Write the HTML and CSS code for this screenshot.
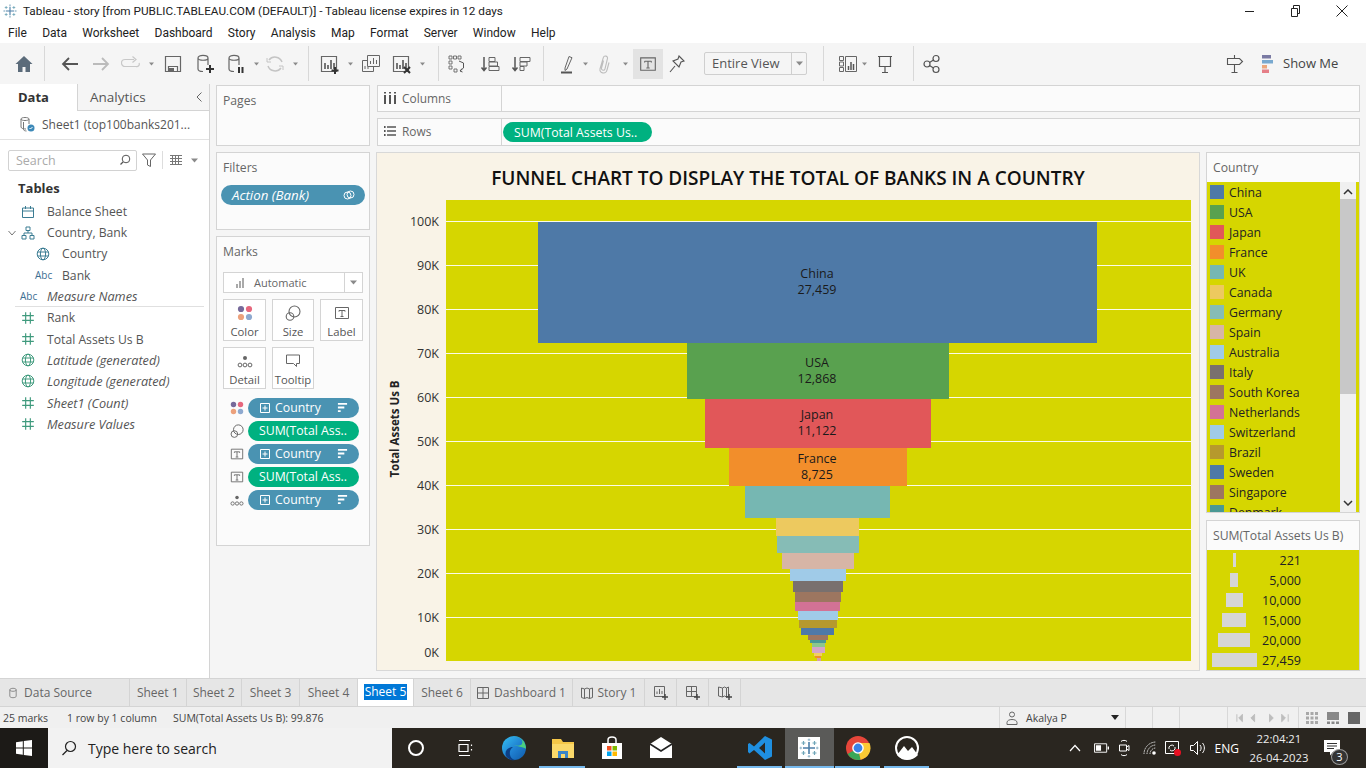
FILE: index.html
```html
<!DOCTYPE html>
<html lang="en">
<head>
<meta charset="utf-8">
<title>Tableau - story</title>
<link rel="stylesheet" href="styles.css">
</head>
<body>
<svg class="sprite" aria-hidden="true">
  <symbol id="logo" viewBox="0 0 20 20"><g fill="none" stroke-width="1.6"><path d="M10 4v12M4 10h12" stroke="#4d7fa8"/><path d="M4.5 3v4M2.5 5h4M15.5 3v4M13.5 5h4M4.5 13v4M2.5 15h4M15.5 13v4M13.5 15h4" stroke="#6fa6b8" stroke-width="1.2"/><path d="M10 .5v2.6M8.7 1.8h2.6M10 17v2.6M8.7 18.3h2.6M1.8 8.7v2.6M.5 10h2.6M18.2 8.7v2.6M17 10h2.6" stroke="#8fb4c8" stroke-width="1"/></g></symbol>
  <symbol id="caret" viewBox="0 0 7 5"><path d="M0 .5h7L3.5 4.500z" fill="#8a8a8a"/></symbol>
  <symbol id="cyl" viewBox="0 0 20 20"><g fill="none" stroke="#666" stroke-width="1.2"><path d="M3 4c0-3.500 10-3.500 10 0v7M3 4c0 3 10 3 10 0M3 4v11c0 2 3 2.500 5 2.500"/></g></symbol>
  <symbol id="chart-box" viewBox="0 0 20 20"><path d="M1.500 2.500h15v15h-15z" fill="none" stroke="#666" stroke-width="1.200"/><path d="M5 9v6M8 11v4M11 6v9M14 9v6" stroke="#555" stroke-width="1.600"/></symbol>
  <symbol id="t-box" viewBox="0 0 16 16"><path d="M1.500 2.500h13v11h-13z" fill="none" stroke="#666"/><path d="M5 5.500h6M8 5.500v6M6.500 11.500h3M5 5.500v1.200M11 5.500v1.200" fill="none" stroke="#666"/></symbol>
  <symbol id="dots" viewBox="0 0 16 16"><circle cx="4" cy="4" r="3.100" fill="#76699a"/><circle cx="12" cy="4" r="3.100" fill="#e6677d"/><circle cx="4" cy="12" r="3.100" fill="#eca17c"/><circle cx="12" cy="12" r="3.100" fill="#8ea9cf"/></symbol>
  <symbol id="lasso" viewBox="0 0 16 16"><g fill="none" stroke="#666" stroke-width="1.100"><circle cx="9.500" cy="6.500" r="5.500"/><circle cx="5" cy="11.500" r="3.800"/></g></symbol>
  <symbol id="detail" viewBox="0 0 16 16"><circle cx="8" cy="5" r="2" fill="#666"/><g fill="none" stroke="#666"><circle cx="3" cy="12" r="1.900"/><circle cx="8" cy="12" r="1.900"/><circle cx="13" cy="12" r="1.900"/></g></symbol>
  <symbol id="plusbox" viewBox="0 0 10 10"><path d="M.5.500h9v9h-9zM5 2.500v5M2.500 5h5" fill="none" stroke="#fff"/></symbol>
  <symbol id="sort" viewBox="0 0 12 12"><path d="M1 1h10v2H1zM1 5h7v2H1zM1 9h3v2H1z" fill="#fff"/></symbol>
  <symbol id="hash" viewBox="0 0 12 12"><path d="M4 1v10M8 1v10M1 4h10M1 8h10" fill="none" stroke="#3f9a7d"/></symbol>
  <symbol id="globe" viewBox="0 0 14 14"><g fill="none" stroke-width="1"><circle cx="7" cy="7" r="5.800"/><ellipse cx="7" cy="7" rx="2.600" ry="5.800"/><path d="M1.500 5h11M1.500 9h11"/></g></symbol>
  <symbol id="sheetplus" viewBox="0 0 16 16"><path d="M1.500 1.500h10v10h-10zM4 9V6.500M6.500 9V4M9 9V6" fill="none" stroke="#666"/><path d="M12 9v6M9 12h6" stroke="#444" stroke-width="1.400"/></symbol>
  <symbol id="dashplus" viewBox="0 0 16 16"><path d="M1.500 1.500h10v10h-10zM6.500 1.500v10M1.500 6.500h10" fill="none" stroke="#666"/><path d="M12 9v6M9 12h6" stroke="#444" stroke-width="1.400"/></symbol>
  <symbol id="storyplus" viewBox="0 0 16 16"><path d="M1.500 2l4 1 2-1 2 1 2-1v9l-2 1-2-1-2 1-4-1zM5.500 3v9M9.500 3v9" fill="none" stroke="#666"/><path d="M12 9v6M9 12h6" stroke="#444" stroke-width="1.400"/></symbol>
</svg>

<header class="titlebar">
  <svg class="title-logo"><use href="#logo"/></svg>
  <span class="title-text">Tableau - story [from PUBLIC.TABLEAU.COM (DEFAULT)] - Tableau license expires in 12 days</span>
  <div class="winbtns">
    <svg class="winbtn" viewBox="0 0 12 12"><path d="M1 6.500h9" stroke="#222" fill="none"/></svg>
    <svg class="winbtn" viewBox="0 0 12 12"><path d="M1.500 3.500h6v8h-6zM3.500 3.500v-3h6v8h-2" stroke="#222" fill="none"/></svg>
    <svg class="winbtn" viewBox="0 0 12 12"><path d="M.5.500l11 11M11.500.500l-11 11" stroke="#222" fill="none"/></svg>
  </div>
</header>

<nav class="menubar">
  <span>File</span><span>Data</span><span>Worksheet</span><span>Dashboard</span><span>Story</span><span>Analysis</span><span>Map</span><span>Format</span><span>Server</span><span>Window</span><span>Help</span>
</nav>

<div class="toolbar">
  <svg class="ti" viewBox="0 0 20 20"><path d="M10 2L1.500 10H4v8h4.500v-5h3v5H16v-8h2.500z" fill="#5b6b7a"/></svg>
  <i class="tsep"></i>
  <svg class="ti" viewBox="0 0 20 20"><path d="M18 10H3M9 4l-6 6 6 6" fill="none" stroke="#555" stroke-width="1.800"/></svg>
  <svg class="ti" viewBox="0 0 20 20"><path d="M2 10h15M11 4l6 6-6 6" fill="none" stroke="#bbb" stroke-width="1.800"/></svg>
  <svg class="ti" viewBox="0 0 20 20"><path d="M13 5.500H4a2.500 2.500 0 0 0 0 7h11a2.500 2.500 0 0 0 3-3.500M11.500 2.500L15 5.500l-3.500 3" fill="none" stroke="#c8c8c8" stroke-width="1.200"/></svg>
  <svg class="tc"><use href="#caret"/></svg>
  <svg class="ti" viewBox="0 0 20 20"><path d="M2.500 2.500h15v15h-15zM5.500 17.500v-5h9v5" fill="none" stroke="#666" stroke-width="1.200"/><path d="M6 14h5v3.500H6z" fill="#666"/></svg>
  <svg class="ti" viewBox="0 0 20 20"><use href="#cyl"/><path d="M15 11v8M11 15h8" stroke="#333" stroke-width="2"/></svg>
  <svg class="ti" viewBox="0 0 20 20"><use href="#cyl"/><path d="M13 13v6M16.500 13v6" stroke="#333" stroke-width="2"/></svg>
  <svg class="tc"><use href="#caret"/></svg>
  <svg class="ti" viewBox="0 0 20 20"><path d="M17 8a7.500 7.500 0 0 0-13-2M3 12a7.500 7.500 0 0 0 13 2" fill="none" stroke="#c4c4c4" stroke-width="1.500"/><path d="M2 4v4h4M18 16v-4h-4" fill="none" stroke="#c4c4c4"/></svg>
  <svg class="tc"><use href="#caret"/></svg>
  <i class="tsep"></i>
  <svg class="ti" viewBox="0 0 20 20"><use href="#chart-box"/><path d="M15 13v7M11.500 16.500h7" stroke="#333" stroke-width="2"/></svg>
  <svg class="tc"><use href="#caret"/></svg>
  <svg class="ti" viewBox="0 0 20 20"><path d="M6.500 1.500h12v11h-12z" fill="#f5f5f5" stroke="#666"/><path d="M9.500 10V7M12.500 10V4M15.500 10V6" stroke="#666"/><path d="M1.500 6.500h5M1.500 6.500v11h11v-5" fill="none" stroke="#666"/><path d="M4 15v-3M7 15v-2" stroke="#666"/></svg>
  <svg class="ti" viewBox="0 0 20 20"><use href="#chart-box"/><path d="M12 13l6 6M18 13l-6 6" stroke="#333" stroke-width="2"/></svg>
  <svg class="tc"><use href="#caret"/></svg>
  <i class="tsep"></i>
  <svg class="ti" viewBox="0 0 20 20"><path d="M2 2h3v3H2zM6.500 2h3v3h-3zM11 2h3v3h-3zM2 7h3v3H2zM2 12h3v3H2zM7 15h3v3H7z" fill="none" stroke="#666" stroke-width=".9"/><path d="M12 7l4.500 2v5l-3.500 3M15 14.500l-2 2.500 2.500 1" fill="none" stroke="#555"/></svg>
  <svg class="ti" viewBox="0 0 20 20"><path d="M4 3v13M1.500 13.500L4 16.500l2.500-3" fill="none" stroke="#555" stroke-width="1.500"/><path d="M9 3.500h6v4H9zM9 8h8.500v4H9zM9 12.500h10v4H9z" fill="none" stroke="#666"/></svg>
  <svg class="ti" viewBox="0 0 20 20"><path d="M4 3v13M1.500 13.500L4 16.500l2.500-3" fill="none" stroke="#555" stroke-width="1.500"/><path d="M9 3.500h10v4H9zM9 8h7v4H9zM9 12.500h4v4H9z" fill="none" stroke="#666"/></svg>
  <i class="tsep"></i>
  <svg class="ti" viewBox="0 0 20 20"><path d="M7 14L11 2.500l3 1.200L9 15l-2 1.500z" fill="none" stroke="#666"/><path d="M3 18.500h11" stroke="#555" stroke-width="2"/></svg>
  <svg class="tc"><use href="#caret"/></svg>
  <svg class="ti" viewBox="0 0 20 20"><path d="M8.500 6.500L6.500 14c-.5 2.500 3 3 3.500.8L12.500 4.500c.5-2.800-3.500-3.300-4.200-.8L5 15c-1 4.500 6 5.500 7 1l2-7.500" fill="none" stroke="#bdbdbd" stroke-width="1.100"/></svg>
  <svg class="tc"><use href="#caret"/></svg>
  <div class="tactive"><svg class="tbox"><use href="#t-box"/></svg></div>
  <svg class="ti" viewBox="0 0 20 20"><path d="M12 2l5 5-3 1-2 5-6-6 5-2zM8 12l-5 6" fill="none" stroke="#555" stroke-width="1.100"/></svg>
  <div class="fit"><span class="fit-text">Entire View</span><span class="fit-arrow"><svg class="cw"><use href="#caret"/></svg></span></div>
  <i class="tsep"></i>
  <svg class="ti" viewBox="0 0 20 20"><path d="M1.500 2.500h4v4h-4zM1.500 8h4v4h-4zM1.500 13.500h4v4h-4zM7.500 2.500h11v15h-11z" fill="none" stroke="#666"/><path d="M10.500 16v-4M13 16V8M15.500 16v-6" stroke="#555" stroke-width="1.500"/></svg>
  <svg class="tc"><use href="#caret"/></svg>
  <svg class="ti" viewBox="0 0 20 20"><path d="M3 2.500h14M4.500 2.500v10h11v-10M10 12.500v6M7 18.500h6" fill="none" stroke="#555" stroke-width="1.200"/></svg>
  <i class="tsep"></i>
  <svg class="ti" viewBox="0 0 20 20"><g fill="none" stroke="#555" stroke-width="1.200"><circle cx="5" cy="10" r="3"/><circle cx="14" cy="4.500" r="3"/><circle cx="14" cy="15.500" r="3"/><path d="M7.500 8.500l4-2.500M7.500 11.500l4 2.500"/></g></svg>
  <svg class="ti" viewBox="0 0 20 20"><path d="M2.500 4.500h12l3 3-3 3h-12zM9.500 1v3.500M9.500 10.500V18M6.500 18.500h6" fill="none" stroke="#555" stroke-width="1.100"/></svg>
  <div class="showme">
    <svg class="showme-icon" viewBox="0 0 11 18"><path d="M0 0h9v3.500H0z" fill="#7a7aa3"/><path d="M0 5h11v3.500H0z" fill="#79a9cf"/><path d="M0 10h5v3.500H0z" fill="#eda77c"/><path d="M0 14.500h7V18H0z" fill="#e57e87"/></svg>
    <span class="showme-text">Show Me</span>
  </div>
</div>

<main class="workspace">
  <aside class="datapane">
    <div class="dtabs">
      <div class="dtab dtab-on">Data</div>
      <div class="dtab">Analytics<svg class="collapse" viewBox="0 0 8 12"><path d="M6.500 1.500L2 6l4.500 4.500" fill="none" stroke="#666"/></svg></div>
    </div>
    <div class="source">
      <svg class="source-icon" viewBox="0 0 16 16"><path d="M2 3c0-2 8-2 8 0v5M2 3c0 2 8 2 8 0M2 3v8c0 1.500 3 2 5 2M4.500 6v7.500c0 1 2 1.500 3 1.500" fill="none" stroke="#777"/><circle cx="12" cy="12" r="3.500" fill="#3d89b8"/><path d="M10.500 12l1 1 2-2" stroke="#fff" fill="none"/></svg>
      <span>Sheet1 (top100banks201...</span>
    </div>
    <div class="searchrow">
      <div class="search"><span>Search</span><svg class="search-icon" viewBox="0 0 12 12"><circle cx="7" cy="5" r="3.800" fill="none" stroke="#555"/><path d="M4 8L1.500 10.500" stroke="#555" stroke-width="1.200"/></svg></div>
      <svg class="filter-icon" viewBox="0 0 14 14"><path d="M.5 1h13L8.500 7v6.500l-3-1.500V7z" fill="none" stroke="#666"/></svg>
      <i class="vsep"></i>
      <svg class="list-icon" viewBox="0 0 12 10"><path d="M0 .5h12M0 3.500h12M0 6.500h12M0 9.500h12M2.500 0v10M5.500 0v10M8.500 0v10" stroke="#777" fill="none"/></svg>
      <svg class="list-caret"><use href="#caret"/></svg>
    </div>
    <div class="tables-h">Tables</div>
    <ul class="fields">
      <li class="f-lv1"><svg class="fi teal" viewBox="0 0 14 14"><path d="M1.500 3h11v9.500h-11zM1.500 6h11M4.500 1v3M9.500 1v3" fill="none" stroke="currentColor"/></svg><span>Balance Sheet</span></li>
      <li class="f-lv1 f-exp"><svg class="chev" viewBox="0 0 8 6"><path d="M.5 1l3.500 4 3.500-4" fill="none" stroke="#777"/></svg><svg class="fi teal" viewBox="0 0 14 14"><path d="M5 1h4v3.500H5zM1 9.500h4V13H1zM9 9.500h4V13H9zM7 4.500v2.500M3 9.500V7h8v2.500" fill="none" stroke="currentColor"/></svg><span>Country, Bank</span></li>
      <li class="f-lv2"><svg class="fi teal"><use href="#globe" stroke="currentColor"/></svg><span>Country</span></li>
      <li class="f-lv2"><span class="abc">Abc</span><span>Bank</span></li>
      <li class="f-lv1 f-last"><span class="abc">Abc</span><em>Measure Names</em></li>
      <li class="f-lv1"><svg class="fi"><use href="#hash"/></svg><span>Rank</span></li>
      <li class="f-lv1"><svg class="fi"><use href="#hash"/></svg><span>Total Assets Us B</span></li>
      <li class="f-lv1"><svg class="fi green"><use href="#globe" stroke="currentColor"/></svg><em>Latitude (generated)</em></li>
      <li class="f-lv1"><svg class="fi green"><use href="#globe" stroke="currentColor"/></svg><em>Longitude (generated)</em></li>
      <li class="f-lv1"><svg class="fi"><use href="#hash"/></svg><em>Sheet1 (Count)</em></li>
      <li class="f-lv1"><svg class="fi"><use href="#hash"/></svg><em>Measure Values</em></li>
    </ul>
  </aside>

  <section class="cards">
    <div class="card card-pages"><h3>Pages</h3></div>
    <div class="card card-filters">
      <h3>Filters</h3>
      <div class="filter-pill"><em>Action (Bank)</em><svg class="link-icon" viewBox="0 0 12 12"><g fill="none" stroke="#fff"><circle cx="4.500" cy="6.500" r="3.500"/><circle cx="7.500" cy="5.500" r="3.500"/></g></svg></div>
    </div>
    <div class="card card-marks">
      <h3>Marks</h3>
      <div class="marktype"><svg class="mt-icon" viewBox="0 0 10 10"><path d="M1 10V6M4 10V3M7 10V0" stroke="#aaa" stroke-width="2"/></svg><span class="mt-text">Automatic</span><span class="mt-arrow"><svg class="cw"><use href="#caret"/></svg></span></div>
      <div class="markgrid">
        <div class="mbtn"><svg class="mi"><use href="#dots"/></svg><span>Color</span></div>
        <div class="mbtn"><svg class="mi"><use href="#lasso"/></svg><span>Size</span></div>
        <div class="mbtn"><svg class="mi"><use href="#t-box"/></svg><span>Label</span></div>
        <div class="mbtn"><svg class="mi"><use href="#detail"/></svg><span>Detail</span></div>
        <div class="mbtn"><svg class="mi" viewBox="0 0 16 16"><path d="M1.500 2h13v8.500h-3v3l-3-3h-7z" fill="none" stroke="#666"/></svg><span>Tooltip</span></div>
      </div>
      <div class="pills">
        <div class="pillrow"><svg class="pi"><use href="#dots"/></svg><div class="pill blue"><svg class="plus"><use href="#plusbox"/></svg><span class="ptext">Country</span><svg class="psort"><use href="#sort"/></svg></div></div>
        <div class="pillrow"><svg class="pi"><use href="#lasso"/></svg><div class="pill green-pill"><span class="ptext">SUM(Total Ass..</span></div></div>
        <div class="pillrow"><svg class="pi"><use href="#t-box"/></svg><div class="pill blue"><svg class="plus"><use href="#plusbox"/></svg><span class="ptext">Country</span><svg class="psort"><use href="#sort"/></svg></div></div>
        <div class="pillrow"><svg class="pi"><use href="#t-box"/></svg><div class="pill green-pill"><span class="ptext">SUM(Total Ass..</span></div></div>
        <div class="pillrow"><svg class="pi"><use href="#detail"/></svg><div class="pill blue"><svg class="plus"><use href="#plusbox"/></svg><span class="ptext">Country</span><svg class="psort"><use href="#sort"/></svg></div></div>
      </div>
    </div>
  </section>

  <section class="view">
    <div class="shelf shelf-cols">
      <div class="shelf-label"><svg class="shelf-icon" viewBox="0 0 12 12"><path d="M1 3v9M6 3v9M11 3v9" stroke="#555" stroke-width="2"/><path d="M0 0h2v1.500H0zM5 0h2v1.500H5zM10 0h2v1.500h-2z" fill="#555"/></svg><span>Columns</span></div>
    </div>
    <div class="shelf shelf-rows">
      <div class="shelf-label"><svg class="shelf-icon" viewBox="0 0 12 12"><path d="M3 2h9M3 6h9M3 10h9" stroke="#555" stroke-width="1.500"/><path d="M0 1h1.600v2H0zM0 5h1.600v2H0zM0 9h1.600v2H0z" fill="#555"/></svg><span>Rows</span></div>
      <div class="row-pill">SUM(Total Assets Us..</div>
    </div>
    <div class="stage">
      <article class="chart-pane">
        <h1 class="chart-title">FUNNEL CHART TO DISPLAY THE TOTAL OF BANKS IN A COUNTRY</h1>
        <svg class="chart" viewBox="377 200 815 461">
          <rect x="446" y="200" width="745" height="461" fill="#d6d600"/>
          <g fill="#fbfbe8">
            <rect x="446" y="221" width="745" height="1"/><rect x="446" y="265" width="745" height="1"/><rect x="446" y="309" width="745" height="1"/><rect x="446" y="353" width="745" height="1"/><rect x="446" y="397" width="745" height="1"/><rect x="446" y="441" width="745" height="1"/><rect x="446" y="485" width="745" height="1"/><rect x="446" y="529" width="745" height="1"/><rect x="446" y="573" width="745" height="1"/><rect x="446" y="617" width="745" height="1"/>
          </g>
          <rect x="538" y="222" width="559" height="121" fill="#4e79a7"/>
          <rect x="687" y="343" width="262" height="56" fill="#59a14f"/>
          <rect x="705" y="399" width="226" height="49" fill="#e15759"/>
          <rect x="729" y="448" width="178" height="38" fill="#f28e2b"/>
          <rect x="745" y="486" width="145" height="32" fill="#76b7b2"/>
          <rect x="776" y="518" width="83" height="18" fill="#edc95f"/>
          <rect x="777" y="536" width="82" height="17" fill="#86bcb6"/>
          <rect x="782" y="553" width="72" height="16" fill="#d7b5a6"/>
          <rect x="790" y="569" width="56" height="12" fill="#a0cbe8"/>
          <rect x="793" y="581" width="50" height="11" fill="#79706e"/>
          <rect x="795" y="592" width="46" height="10" fill="#9d7660"/>
          <rect x="795" y="602" width="45" height="9" fill="#d37295"/>
          <rect x="798" y="611" width="40" height="9" fill="#a0cbe8"/>
          <rect x="799" y="620" width="38" height="8" fill="#b6992d"/>
          <rect x="801" y="628" width="33" height="7" fill="#4e79a7"/>
          <rect x="808" y="635" width="20" height="5" fill="#9d7660"/>
          <rect x="810" y="640" width="16" height="3" fill="#499894"/>
          <rect x="812" y="643" width="13" height="4" fill="#8cc78e"/>
          <rect x="812" y="647" width="13" height="6" fill="#d4a6c8"/>
          <rect x="814" y="653" width="8" height="3" fill="#f1ce63"/>
          <rect x="815" y="656" width="6" height="2" fill="#f28e2b"/>
          <rect x="817" y="658" width="4" height="3" fill="#d7a0a8"/>
          <g class="bar-label">
            <text x="817" y="278">China</text><text x="817" y="294">27,459</text>
            <text x="817" y="367">USA</text><text x="817" y="383">12,868</text>
            <text x="817" y="419">Japan</text><text x="817" y="435">11,122</text>
            <text x="817" y="463">France</text><text x="817" y="479">8,725</text>
          </g>
          <g class="axis-label">
            <text x="439" y="226">100K</text><text x="439" y="270">90K</text><text x="439" y="314">80K</text><text x="439" y="358">70K</text><text x="439" y="402">60K</text><text x="439" y="446">50K</text><text x="439" y="490">40K</text><text x="439" y="534">30K</text><text x="439" y="578">20K</text><text x="439" y="622">10K</text><text x="439" y="657">0K</text>
          </g>
          <text class="axis-title" transform="translate(399 429) rotate(-90)">Total Assets Us B</text>
        </svg>
      </article>
      <aside class="legends">
        <div class="legend legend-color">
          <div class="legend-h">Country</div>
          <div class="legend-body">
            <ul class="legend-list">
              <li><i style="background:#4e79a7"></i>China</li>
              <li><i style="background:#59a14f"></i>USA</li>
              <li><i style="background:#e15759"></i>Japan</li>
              <li><i style="background:#f28e2b"></i>France</li>
              <li><i style="background:#76b7b2"></i>UK</li>
              <li><i style="background:#edc95f"></i>Canada</li>
              <li><i style="background:#86bcb6"></i>Germany</li>
              <li><i style="background:#d7b5a6"></i>Spain</li>
              <li><i style="background:#a0cbe8"></i>Australia</li>
              <li><i style="background:#79706e"></i>Italy</li>
              <li><i style="background:#9d7660"></i>South Korea</li>
              <li><i style="background:#d37295"></i>Netherlands</li>
              <li><i style="background:#a0cbe8"></i>Switzerland</li>
              <li><i style="background:#b6992d"></i>Brazil</li>
              <li><i style="background:#4e79a7"></i>Sweden</li>
              <li><i style="background:#9d7660"></i>Singapore</li>
              <li><i style="background:#499894"></i>Denmark</li>
            </ul>
            <div class="scrollbar">
              <svg class="sb-arrow" viewBox="0 0 10 6"><path d="M1 5l4-4 4 4" fill="none" stroke="#333" stroke-width="1.500"/></svg>
              <div class="sb-thumb"></div>
              <svg class="sb-arrow sb-down" viewBox="0 0 10 6"><path d="M1 1l4 4 4-4" fill="none" stroke="#333" stroke-width="1.500"/></svg>
            </div>
          </div>
        </div>
        <div class="legend legend-size">
          <div class="legend-h">SUM(Total Assets Us B)</div>
          <ul class="size-list">
            <li><span class="sz-cell"><i class="sz" style="width:3px"></i></span><b>221</b></li>
            <li><span class="sz-cell"><i class="sz" style="width:8px"></i></span><b>5,000</b></li>
            <li><span class="sz-cell"><i class="sz" style="width:17px"></i></span><b>10,000</b></li>
            <li><span class="sz-cell"><i class="sz" style="width:24px"></i></span><b>15,000</b></li>
            <li><span class="sz-cell"><i class="sz" style="width:32px"></i></span><b>20,000</b></li>
            <li><span class="sz-cell"><i class="sz" style="width:45px"></i></span><b>27,459</b></li>
          </ul>
        </div>
      </aside>
    </div>
  </section>
</main>

<div class="tabs">
  <div class="tab tab-ds"><svg class="tab-icon" viewBox="0 0 10 14"><path d="M1 3c0-2.500 8-2.500 8 0v8c0 2.500-8 2.500-8 0zM1 3c0 2.500 8 2.500 8 0" fill="none" stroke="#777"/></svg>Data Source</div>
  <div class="tab">Sheet 1</div>
  <div class="tab">Sheet 2</div>
  <div class="tab">Sheet 3</div>
  <div class="tab">Sheet 4</div>
  <div class="tab tab-on"><span class="tab-sel">Sheet 5</span></div>
  <div class="tab">Sheet 6</div>
  <div class="tab"><svg class="tab-icon" viewBox="0 0 12 12"><path d="M.5.500h11v11H.5zM6 .5v11M.5 6h11" fill="none" stroke="#666"/></svg>Dashboard 1</div>
  <div class="tab"><svg class="tab-icon" viewBox="0 0 12 12"><path d="M.5 1l3 1 2.500-1 2.500 1 3-1v9.500l-3 1-2.500-1-2.500 1-3-1zM3.500 2v9.500M8.500 2v9.500" fill="none" stroke="#666"/></svg>Story 1</div>
  <div class="tab tab-add"><svg class="add-icon"><use href="#sheetplus"/></svg></div>
  <div class="tab tab-add"><svg class="add-icon"><use href="#dashplus"/></svg></div>
  <div class="tab tab-add"><svg class="add-icon"><use href="#storyplus"/></svg></div>
</div>

<footer class="status">
  <span class="st-a">25 marks</span><span class="st-b">1 row by 1 column</span><span class="st-c">SUM(Total Assets Us B): 99.876</span>
  <div class="st-user"><svg class="user-icon" viewBox="0 0 12 14"><circle cx="6" cy="3.500" r="2.500" fill="none" stroke="#666"/><path d="M1 13.500v-2c0-4 10-4 10 0v2z" fill="none" stroke="#666"/></svg><span>Akalya P</span><svg class="user-caret" viewBox="0 0 8 5"><path d="M0 0h8L4 5z" fill="#222"/></svg></div>
  <i class="st-cell"></i><i class="st-cell"></i>
  <div class="st-nav"><svg class="nav-icons" viewBox="0 0 60 10"><path d="M2 1v8M8 1L4 5l4 4zM21 1l-4 4 4 4zM37 1l4 4-4 4zM50 1l4 4-4 4zM57 1v8" stroke="#bdbdbd" fill="#bdbdbd"/></svg></div>
  <div class="st-views">
    <svg class="v-ico" viewBox="0 0 12 12"><path d="M0 0h3v3H0zM4.500 0h3v3h-3zM9 0h3v3H9zM0 4.500h3v3H0zM4.500 4.500h3v3h-3zM9 4.500h3v3H9zM0 9h3v3H0zM4.500 9h3v3h-3zM9 9h3v3H9z" fill="#a8a8a8"/></svg>
    <svg class="v-ico" viewBox="0 0 12 12"><path d="M0 0h12v8H0zM0 9.500h3V12H0zM4.500 9.500h3V12h-3zM9 9.500h3V12H9z" fill="#888"/></svg>
    <svg class="v-ico" viewBox="0 0 12 12"><path d="M0 0h12v12H0z" fill="#666"/></svg>
  </div>
</footer>

<div class="taskbar">
  <div class="start"><svg class="win" viewBox="0 0 16 16"><path d="M0 2.200L6.800 1.200V7.500H0zM7.800 1L16 0V7.500H7.800zM0 8.500H6.800V14.800L0 13.800zM7.800 8.500H16V16L7.800 15z" fill="#fff"/></svg></div>
  <div class="tsearch"><svg class="ts-icon" viewBox="0 0 16 16"><circle cx="9.500" cy="6.500" r="5" fill="none" stroke="#222" stroke-width="1.200"/><path d="M6 10.500L1.500 15" stroke="#222" stroke-width="1.300"/></svg><span>Type here to search</span></div>
  <div class="apps">
    <div class="app"><svg class="a" viewBox="0 0 22 22"><circle cx="11" cy="11" r="7" fill="none" stroke="#fff" stroke-width="2"/></svg></div>
    <div class="app"><svg class="a" viewBox="0 0 22 22"><path d="M5 3.500h11M5 18.500h11M5 7.500h9v7H5zM17.500 7.500v1.500M17.500 12v1.500" fill="none" stroke="#fff" stroke-width="1.200"/></svg></div>
    <div class="app"><svg class="a-lg" viewBox="0 0 26 26"><defs><linearGradient id="eg" x1="0" y1="0" x2="1" y2="1"><stop offset="0" stop-color="#35c1f1"/><stop offset=".55" stop-color="#1f7fd0"/><stop offset="1" stop-color="#0f5aa8"/></linearGradient></defs><circle cx="13" cy="13" r="12" fill="url(#eg)"/><path d="M25 14c0-7-5-13-13-13C18 1 23 5 21 9c-2 3-8 1-8 1 3 1 12 3 12 4z" fill="#4cd07f"/><path d="M14 25C8 24 7 15 12 12c-5 0-9 4-7 9 2 3 6 5 9 4z" fill="#0c3f86"/></svg></div>
    <div class="app app-line"><svg class="a-lg" viewBox="0 0 26 26"><path d="M2 4h9l2 3h11v16H2z" fill="#f5c748"/><path d="M2 9h22v14H2z" fill="#fbd96a"/><path d="M8 16h10v7h-3v-4h-4v4H8z" fill="#3b86c9"/></svg></div>
    <div class="app"><svg class="a-lg" viewBox="0 0 26 26"><path d="M3 8h20v16H3z" fill="#fff"/><path d="M9 8V5c0-4 8-4 8 0v3" fill="none" stroke="#fff" stroke-width="1.500"/><path d="M8 11h4.500v4.500H8z" fill="#f25022"/><path d="M13.500 11H18v4.500h-4.500z" fill="#7fba00"/><path d="M8 16.500h4.500V21H8z" fill="#00a4ef"/><path d="M13.500 16.500H18V21h-4.500z" fill="#ffb900"/></svg></div>
    <div class="app"><svg class="a-lg" viewBox="0 0 26 26"><path d="M2 9l11-7 11 7v14H2z" fill="#fff"/><path d="M2 9l11 7 11-7" fill="none" stroke="#222" stroke-width="1.500"/></svg></div>
    <div class="app"></div>
    <div class="app app-line"><svg class="a-lg" viewBox="0 0 26 26"><path d="M18 1l7 3.500v17L18 25 7 15l-4.500 3.500L1 17v-8l1.500-1L7 11.500zM18 7.500l-6 5.500 6 5.500z" fill="#1f8fe0"/></svg></div>
    <div class="app app-on"><div class="tab-logo"><svg class="tl"><use href="#logo"/></svg></div></div>
    <div class="app app-line"><svg class="a-lg" viewBox="0 0 26 26"><circle cx="13" cy="13" r="12" fill="#e6463a"/><path d="M13 13L2.600 19a12 12 0 0 0 13 5.700z" fill="#3aa757"/><path d="M13 13l2.600 11.700A12 12 0 0 0 24.500 8H13z" fill="#fcc934"/><circle cx="13" cy="13" r="5.800" fill="#fff"/><circle cx="13" cy="13" r="4.400" fill="#3b82e8"/></svg></div>
    <div class="app app-line"><svg class="a-lg" viewBox="0 0 26 26"><circle cx="13" cy="13" r="11" fill="none" stroke="#fff" stroke-width="2"/><path d="M3 20l7-9 4 5 4-4 6 8c-5 6-16 6-21 0z" fill="#fff"/></svg></div>
  </div>
  <div class="tray">
    <svg class="ty ty-up" viewBox="0 0 12 8"><path d="M1 7l5-5.500L11 7" fill="none" stroke="#fff" stroke-width="1.200"/></svg>
    <svg class="ty ty-bat" viewBox="0 0 16 10"><path d="M.5.500h13v9H.5z" fill="none" stroke="#fff"/><path d="M2 2h5.500v6H2zM14.500 3.500H16v3h-1.500z" fill="#fff"/></svg>
    <svg class="ty ty-cam" viewBox="0 0 12 18"><path d="M3 2.500C4 1 8 1 9 2.500M3 15.500c1 1.500 5 1.500 6 0M1.500 6h7v6h-7zM8.500 8l2.500-1.500v5L8.500 10" fill="none" stroke="#fff"/></svg>
    <svg class="ty ty-wifi" viewBox="0 0 16 16"><path d="M2 14a12 12 0 0 1 12-12M5 14a9 9 0 0 1 9-9M8 14a6 6 0 0 1 6-6" fill="none" stroke="#ddd" stroke-dasharray="1.500 .8"/><circle cx="12" cy="13" r="1.800" fill="#fff"/></svg>
    <svg class="ty ty-rec" viewBox="0 0 18 18"><path d="M1.500 2.500h13v12h-13z" fill="none" stroke="#fff"/><path d="M5 10a3 3 0 0 1 5-3M11 8a3 3 0 0 1-5 3" fill="none" stroke="#fff"/><circle cx="13.500" cy="13.500" r="3.500" fill="#e81123"/></svg>
    <svg class="ty ty-vol" viewBox="0 0 16 16"><path d="M1.500 5.500h3l4-4v13l-4-4h-3zM11 5c1.500 2 1.500 4 0 6M13.500 3c2.500 3 2.500 7 0 10" fill="none" stroke="#fff"/></svg>
    <span class="eng">ENG</span>
    <div class="clock"><span>22:04:21</span><span>26-04-2023</span></div>
    <div class="notif"><svg class="bubble" viewBox="0 0 16 16"><path d="M0 0h16v12H9l-3 3.500V12H0z" fill="#fff"/><path d="M3 3.500h10M3 6h10M3 8.500h7" stroke="#333"/></svg><span class="badge">3</span></div>
  </div>
</div>
</body>
</html>
```
FILE: styles.css
```css
* { box-sizing: border-box; }
html, body { margin: 0; padding: 0; }
body {
  width: 1366px; height: 768px; overflow: hidden;
  font-family: "Open Sans", "Noto Sans", sans-serif;
  color: #444; background: #fff;
  display: flex; flex-direction: column;
  font-size: 12px;
}
.sprite { display: none; }
ul { list-style: none; margin: 0; padding: 0; }
h1, h3 { margin: 0; font-weight: 400; }
em { font-style: italic; }

/* title and menu */
.titlebar { height: 22px; flex: none; display: flex; align-items: center; padding-left: 3px; background: #fff; color: #222; font-family: Roboto, sans-serif; }
.title-logo { width: 14px; height: 14px; }
.title-text { margin-left: 6px; font-size: 11.780px; }
.winbtns { margin-left: auto; display: flex; margin-right: 1px; }
.winbtn { width: 12px; height: 12px; margin: 0 17px; }
.menubar { height: 21px; flex: none; display: flex; gap: 15.300px; padding-left: 8px; align-items: center; color: #222; font-size: 12px; background: #fff; font-family: Roboto, sans-serif; }

/* toolbar */
.toolbar {
  height: 41px; flex: none; background: #f5f5f5; padding-left: 14px;
  display: grid; align-items: center; justify-items: start;
  grid-template-columns: 30px 16px 31px 30px 27px 15px 32px 31px 27px 12px 27px 16px 12px 27px 14px 31px 27px 19px 9px 33px 31px 32px 15px 24px 13px 27px 11px 34px 37px 119px 15px 23px 14px 38px 9px 303px 37px auto;
}
.ti { width: 20px; height: 20px; }
.tc { width: 5px; height: 4px; margin-left: 1px; }
.tsep { width: 1px; height: 35px; background: #d8d8d8; display: block; }
.tactive { width: 30px; height: 30px; background: #e3e3e3; display: flex; align-items: center; justify-content: center; }
.tbox { width: 18px; height: 18px; }
.fit { width: 103px; height: 23px; border: 1px solid #cfcfcf; border-radius: 2px; display: flex; align-items: center; font-size: 13px; color: #555; }
.fit-text { flex: 1; padding: 0 0 2px 7px; }
.fit-arrow { width: 15px; height: 100%; border-left: 1px solid #cfcfcf; display: flex; align-items: center; justify-content: center; }
.cw { width: 7px; height: 5px; }
.showme { display: flex; align-items: center; gap: 10px; font-size: 13px; color: #444; }
.showme-text { margin-top: -2px; }
.showme-icon { width: 11px; height: 18px; }

/* workspace */
.workspace { height: 594px; flex: none; display: grid; grid-template-columns: 210px 166px 1fr; background: #f5f5f5; }
.datapane { background: #fff; border-right: 1px solid #d4d4d4; }
.dtabs { display: flex; height: 27px; }
.dtab { font-size: 13.500px; padding: 4px 0 0 12px; flex: 1; background: #f5f5f5; border-bottom: 1px solid #d4d4d4; border-left: 1px solid #d4d4d4; display: flex; color: #555; }
.dtab-on { flex: none; width: 77px; background: #fff; border: 0; font-weight: 700; font-size: 13px; padding: 4px 0 0 18px; color: #333; }
.collapse { width: 8px; height: 12px; margin: 3px 6px 0 auto; }
.source { height: 29px; display: flex; align-items: center; padding: 0 0 2px 19px; gap: 7px; border-bottom: 1px solid #e2e2e2; color: #555; }
.source-icon { width: 16px; height: 16px; }
.searchrow { height: 30px; display: flex; align-items: center; padding: 10px 0 0 8px; }
.search { width: 129px; height: 21px; border: 1px solid #d2d2d2; border-radius: 2px; display: flex; align-items: center; justify-content: space-between; padding: 0 5px 0 7px; color: #aaa; font-size: 12.500px; }
.search-icon { width: 12px; height: 12px; }
.filter-icon { width: 14px; height: 14px; margin-left: 5px; }
.vsep { width: 1px; height: 18px; background: #ddd; margin: 0 7px 0 6px; display: block; }
.list-icon { width: 12px; height: 10px; }
.list-caret { width: 7px; height: 5px; margin-left: 9px; }
.tables-h { height: 28px; font-size: 13px; font-weight: 700; color: #333; padding: 9px 0 0 18px; }
.fields { margin-top: 3px; }
.fields li { height: 21.200px; display: flex; align-items: center; color: #555; font-size: 12.200px; position: relative; }
.fields em { font-size: 12.700px; }
.f-lv1 { padding-left: 21px; }
.f-lv1 > svg.fi { margin-right: 12px; }
.f-lv1 > .abc, .f-lv2 > .abc { margin-right: 10px; }
.f-lv2 { padding-left: 36px; }
.f-lv2 > svg.fi { margin-right: 12px; }
.f-exp { padding-left: 8px; }
.f-exp .chev { width: 8px; height: 6px; margin-right: 5px; }
.fields .f-last { height: 21.500px; padding-bottom: 2px; }
.f-last::after { content: ""; position: absolute; left: 15px; right: 5px; bottom: 0; height: 1px; background: #e0e0e0; }
.fi { width: 14px; height: 14px; flex: none; color: #3b7c93; }
.fi.teal { color: #3b7c93; }
.fi.green { color: #3f9a7d; }
.abc { width: 17px; font-size: 10px; color: #3b6e92; flex: none; margin-left: -1px; }

/* cards */
.cards { padding: 1px 6px 0; display: flex; flex-direction: column; gap: 6px; }
.card { background: #fbfbfb; border: 1px solid #d4d4d4; padding: 6px 6px; }
.card h3 { font-size: 12.200px; color: #666; line-height: 17px; }
.card-pages { height: 61px; }
.card-filters { height: 78px; }
.card-filters h3 { margin-bottom: 9px; }
.card-marks { height: 310px; }
.filter-pill { height: 20px; margin: 0 -2px 0 -2px; background: #4a93b2; border-radius: 10px; color: #fff; display: flex; align-items: center; justify-content: space-between; padding: 0 10px 0 11px; font-size: 13.300px; }
.link-icon { width: 12px; height: 12px; }
.marktype { margin-top: 12px; height: 21px; border: 1px solid #d4d4d4; display: flex; align-items: center; color: #666; font-size: 11px; background: #fff; }
.mt-icon { width: 10px; height: 10px; margin-left: 12px; }
.mt-text { margin-left: 8px; flex: 1; }
.mt-arrow { width: 18px; height: 100%; border-left: 1px solid #d4d4d4; display: flex; align-items: center; justify-content: center; }
.markgrid { display: grid; grid-template-columns: 43px 42px 43px; column-gap: 6px; row-gap: 6px; margin-top: 6px; }
.mbtn { height: 42px; border: 1px solid #d4d4d4; display: flex; flex-direction: column; align-items: center; padding-top: 5px; font-size: 11.300px; color: #555; background: #fff; }
.mi { width: 16px; height: 16px; margin-bottom: 3px; flex: none; }
.pills { margin-top: 8.500px; display: flex; flex-direction: column; gap: 3px; }
.pillrow { display: flex; align-items: center; padding-left: 7px; }
.pi { width: 14px; height: 14px; margin-right: 4px; flex: none; }
.pill { width: 111px; height: 20px; flex: none; border-radius: 10px; color: #fff; display: flex; align-items: center; font-size: 12.300px; }
.blue { background: #4a93b2; padding-left: 12px; }
.green-pill { background: #00b180; padding-left: 11px; }
.plus { width: 10px; height: 10px; margin-right: 5px; }
.ptext { flex: 1; white-space: nowrap; }
.psort { width: 11px; height: 11px; margin-right: 11px; }

/* view */
.view { display: flex; flex-direction: column; padding: 1px 6px 7px 1px; }
.shelf { height: 27px; background: #fbfbfb; border: 1px solid #d4d4d4; display: flex; align-items: center; flex: none; }
.shelf-rows { margin-top: 6px; height: 28px; }
.shelf-label { width: 124px; height: 100%; border-right: 1px solid #d4d4d4; display: flex; align-items: center; padding: 0 0 2px 6px; gap: 6px; color: #666; font-size: 11.900px; }
.shelf-icon { width: 12px; height: 12px; }
.row-pill { margin-left: 1px; width: 149px; height: 20px; border-radius: 10px; background: #00b180; color: #fff; font-size: 12.300px; display: flex; align-items: center; padding-left: 11px; }
.stage { flex: 1; display: flex; margin-top: 6px; margin-left: -1px; gap: 6px; min-height: 0; }
.chart-pane { width: 824px; background: #f9f3e7; border: 1px solid #d8d8d8; display: flex; flex-direction: column; align-items: center; }
.chart-title { height: 47px; flex: none; font-size: 19px; font-weight: 600; line-height: 50px; color: #111; white-space: nowrap; }
.chart { width: 815px; height: 461px; flex: none; margin-left: -8px; }
.bar-label text { font-size: 12.500px; fill: #1a1a1a; text-anchor: middle; font-family: "Open Sans", sans-serif; }
.axis-label text { font-size: 12.500px; fill: #333; text-anchor: end; font-family: "Open Sans", sans-serif; }
.axis-title { font-size: 11.500px; font-weight: 700; fill: #222; text-anchor: middle; font-family: "Open Sans", sans-serif; }

/* legends */
.legends { width: 154px; display: flex; flex-direction: column; gap: 7px; }
.legend { border: 1px solid #d4d4d4; background: #d6d600; display: flex; flex-direction: column; }
.legend-color { height: 361px; flex: none; }
.legend-size { height: 151px; flex: none; }
.legend-h { background: #fbfbfb; font-size: 12.200px; color: #666; padding-left: 6px; flex: none; display: flex; align-items: center; height: 29px; }
.legend-body { flex: 1; display: flex; min-height: 0; padding-right: 3px; }
.legend-list { flex: 1; overflow: hidden; padding-left: 3px; }
.legend-list li { height: 20px; display: flex; align-items: center; gap: 5px; font-size: 12.300px; color: #222; }
.legend-list i { width: 14px; height: 14px; flex: none; }
.scrollbar { width: 16px; background: #f0f0f0; display: flex; flex-direction: column; }
.sb-arrow { width: 10px; height: 6px; margin: 7px auto 4px; flex: none; }
.sb-down { margin: auto auto 6px; }
.sb-thumb { height: 195px; background: #c8c8c8; flex: none; }
.size-list { flex: 1; }
.size-list li { height: 20px; display: flex; align-items: center; font-size: 12.500px; color: #222; }
.sz-cell { width: 53px; display: flex; justify-content: center; padding-left: 1px; }
.sz { height: 14px; background: #d6d6d6; display: block; }
.size-list b { font-weight: 400; width: 41px; text-align: right; }

/* tabs */
.tabs { height: 29px; flex: none; background: #e6e6e6; border-top: 1px solid #d4d4d4; border-bottom: 1px solid #d4d4d4; display: grid; grid-template-columns: 130px 56.500px 55.500px 58px 58px 56px 57px 102px 72px 32px 32px 32px 1fr; font-size: 12px; color: #666; }
.tab { border-right: 1px solid #d4d4d4; display: flex; align-items: center; justify-content: center; gap: 5px; }
.tab-ds { justify-content: flex-start; padding-left: 9px; gap: 7px; }
.tab-on { background: #fff; }
.tab-sel { background: #0078d7; color: #fff; padding: 0 1px; height: 16px; line-height: 15px; margin-top: -2px; }
.tab-icon { width: 12px; height: 12px; }
.tab-ds .tab-icon { width: 8px; height: 12px; }
.add-icon { width: 16px; height: 16px; }

/* status */
.status { height: 21px; flex: none; background: #f0f0f0; display: flex; align-items: center; font-size: 10.500px; color: #444; }
.st-a { margin-left: 3px; width: 64px; }
.st-b { width: 106px; }
.st-c { width: 826px; }
.st-user { width: 127px; height: 100%; border-left: 1px solid #d8d8d8; border-right: 1px solid #d8d8d8; display: flex; align-items: center; padding-left: 6px; gap: 8px; }
.user-icon { width: 12px; height: 14px; }
.user-caret { width: 8px; height: 5px; margin-left: auto; margin-right: 6px; }
.st-cell { width: 27px; height: 100%; border-right: 1px solid #d8d8d8; display: block; }
.st-nav { margin-left: 47px; width: 72px; height: 100%; border-left: 1px solid #d8d8d8; border-right: 1px solid #d8d8d8; display: flex; align-items: center; justify-content: center; }
.nav-icons { width: 56px; height: 10px; }
.st-views { display: flex; gap: 9px; padding-left: 7px; }
.v-ico { width: 12px; height: 12px; }

/* taskbar */
.taskbar { height: 40px; flex: none; background: #2a2620; display: flex; color: #fff; }
.start { width: 48px; display: flex; align-items: center; justify-content: center; background: #1c1a17; }
.win { width: 16px; height: 16px; }
.tsearch { width: 344px; background: #f2f2f2; color: #222; display: flex; align-items: center; padding-left: 13px; gap: 11px; font-size: 14px; }
.ts-icon { width: 16px; height: 16px; }
.apps { display: grid; grid-template-columns: 48.500px 48.500px 49px 50px 48.500px 49px 50px 49px 49px 49px 49px; padding-left: 0; height: 40px; }
.app { display: flex; align-items: center; justify-content: center; position: relative; }
.a { width: 22px; height: 22px; }
.a-lg { width: 26px; height: 26px; }
.app-on { background: #5a5a58; }
.app-line::after, .app-on::after { content: ""; position: absolute; left: 1px; right: 3px; bottom: 0; height: 2px; background: #76b9ed; }
.app-on::after { left: 0; right: 0; }
.tab-logo { width: 22px; height: 22px; background: #fff; display: flex; align-items: center; justify-content: center; }
.tl { width: 20px; height: 20px; }
.tray { flex: 1; display: flex; align-items: center; padding-left: 0; position: relative; }
.ty { flex: none; }
.ty-up { width: 12px; height: 8px; margin-left: 137px; }
.ty-bat { width: 15px; height: 10px; margin-left: 13px; }
.ty-cam { width: 12px; height: 18px; margin-left: 9px; }
.ty-wifi { width: 16px; height: 16px; margin-left: 12px; }
.ty-rec { width: 18px; height: 18px; margin-left: 6px; }
.ty-vol { width: 16px; height: 16px; margin-left: 7px; }
.eng { margin-left: 10px; font-size: 12px; }
.clock { margin-left: 8px; width: 64px; display: flex; flex-direction: column; align-items: center; font-size: 11.300px; line-height: 19px; color: #eee; }
.notif { margin-left: 13px; width: 28px; height: 30px; position: relative; }
.bubble { width: 16px; height: 16px; margin-top: 7px; display: block; }
.badge { position: absolute; left: 7px; top: 16px; width: 17px; height: 16px; border-radius: 50%; border: 1px solid #999; background: #333; font-size: 11px; line-height: 14px; text-align: center; }
```
